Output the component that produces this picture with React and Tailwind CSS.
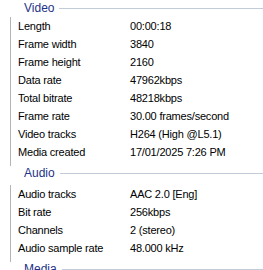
import React from "react";

const groups = [
  {
    title: "Video",
    rows: [
      ["Length", "00:00:18"],
      ["Frame width", "3840"],
      ["Frame height", "2160"],
      ["Data rate", "47962kbps"],
      ["Total bitrate", "48218kbps"],
      ["Frame rate", "30.00 frames/second"],
      ["Video tracks", "H264 (High @L5.1)"],
      ["Media created", "17/01/2025 7:26 PM"],
    ],
  },
  {
    title: "Audio",
    rows: [
      ["Audio tracks", "AAC 2.0 [Eng]"],
      ["Bit rate", "256kbps"],
      ["Channels", "2 (stereo)"],
      ["Audio sample rate", "48.000 kHz"],
    ],
  },
  { title: "Media", rows: [] },
];

function GroupHeader({ title, first }) {
  return (
    <div className={first ? "h-[17px] pt-[1px]" : "h-[19px]"}>
      <div className="flex h-[14px] items-center gap-[5px] pl-[14px]">
        <span className="text-[12px] leading-[14px] text-[#1e3287]">{title}</span>
        <div className="h-px flex-1 bg-[#c2cbd8]" />
      </div>
    </div>
  );
}

function Row({ label, value }) {
  return (
    <div className="flex h-[18px] items-center text-[11px] leading-[13px] tracking-[-0.2px] text-black">
      <span className="w-[119px] shrink-0 pl-[7px]">{label}</span>
      <span className="whitespace-nowrap">{value}</span>
    </div>
  );
}

export default function App() {
  return (
    <div
      className="h-[270px] w-[263px] overflow-hidden bg-white"
      style={{ fontFamily: '"Liberation Sans", Arial, sans-serif' }}
    >
      <div className="pl-[10px]">
        {groups.map((g, i) => (
          <div key={g.title}>
            <GroupHeader title={g.title} first={i === 0} />
            {g.rows.length > 0 && (
              <div className="border-l border-[#b4b4b4] pb-[5px]">
                {g.rows.map(([l, v]) => (
                  <Row key={l} label={l} value={v} />
                ))}
              </div>
            )}
          </div>
        ))}
      </div>
    </div>
  );
}
